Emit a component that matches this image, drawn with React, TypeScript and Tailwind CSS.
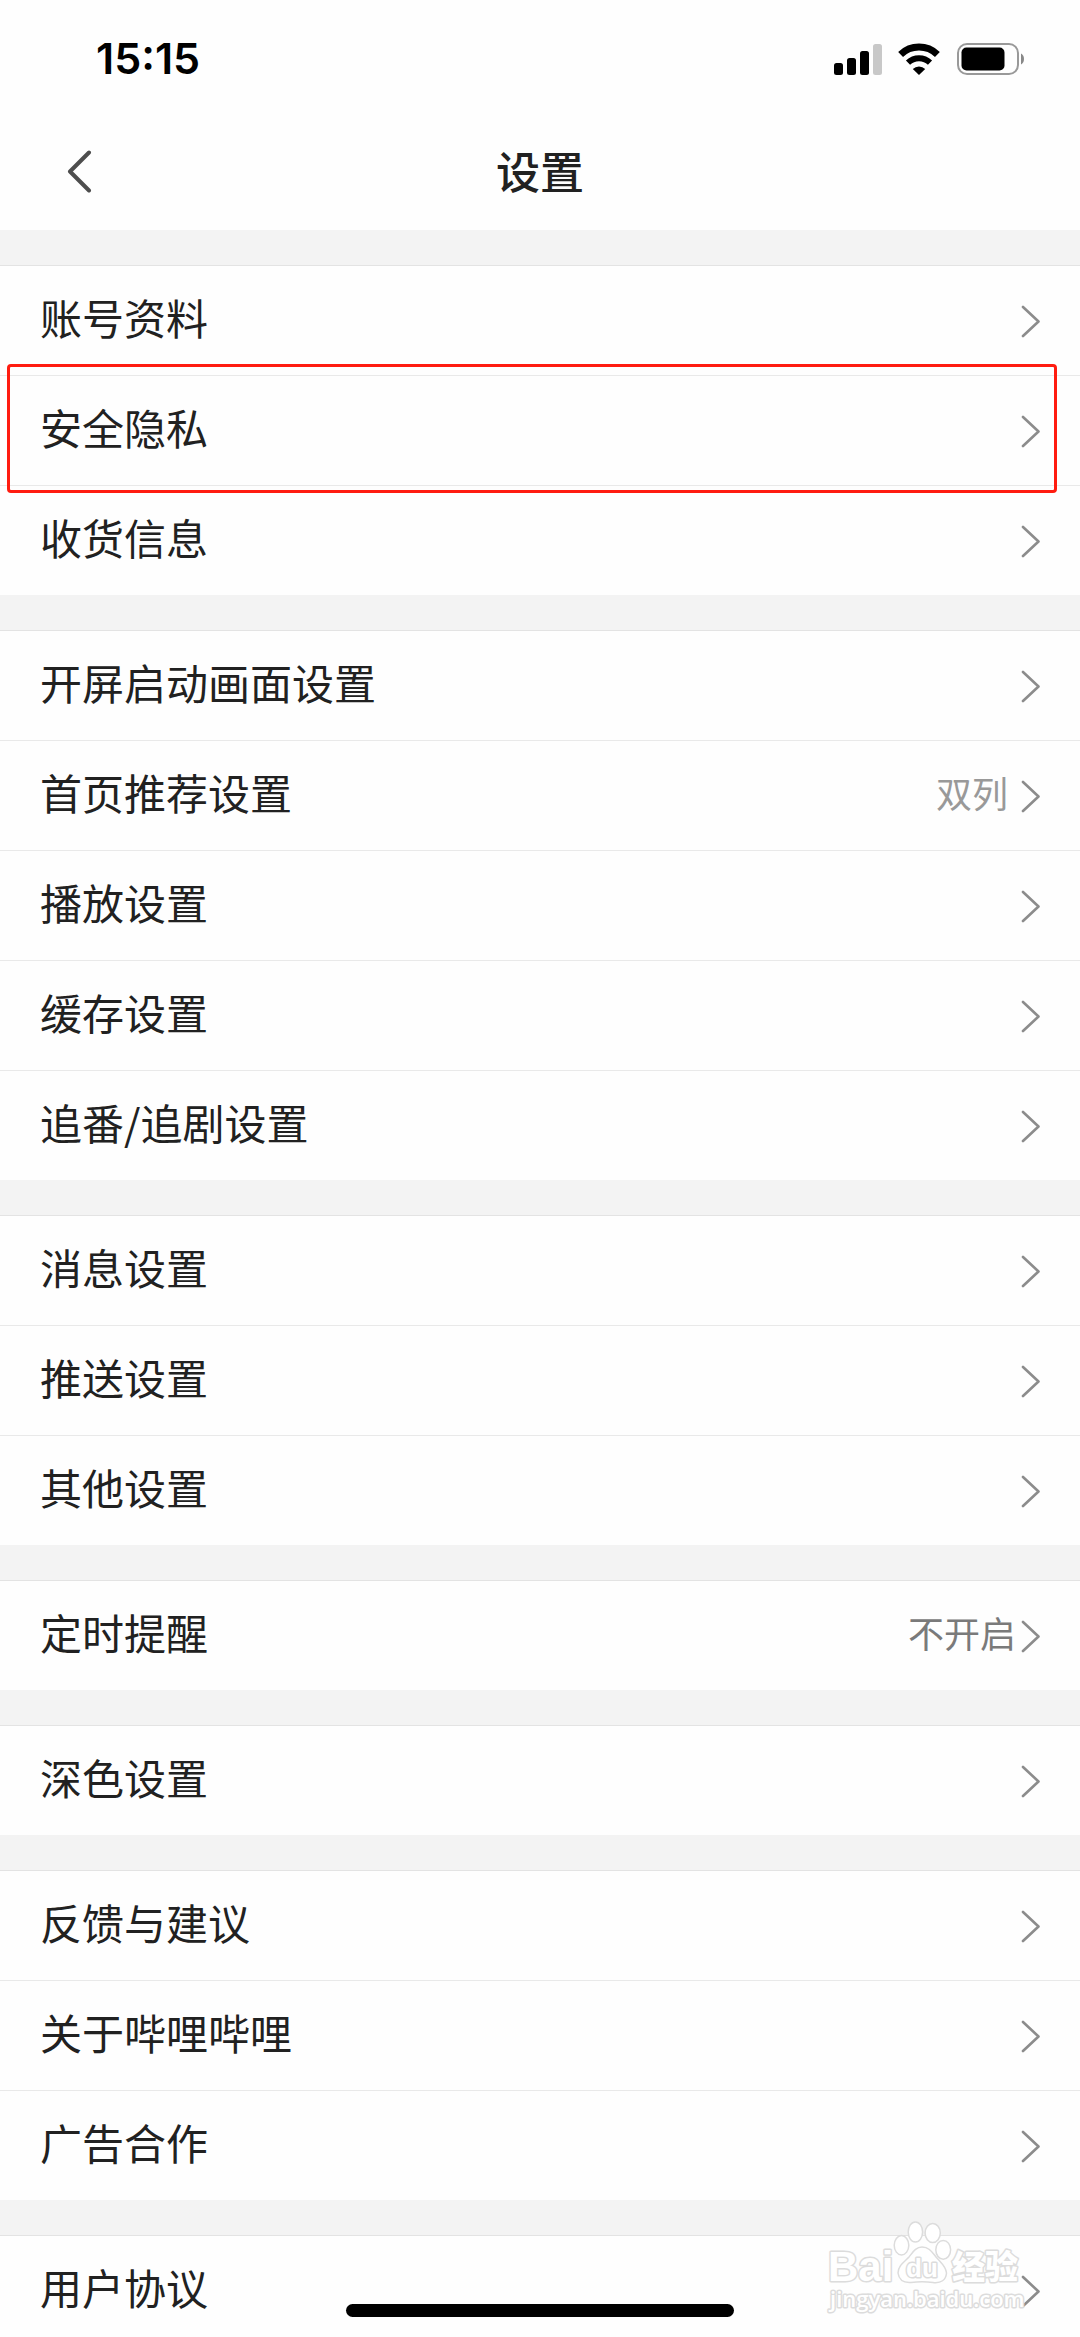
type Row = { label: string; value?: string; valueClass?: string; marked?: boolean };

const groups: Row[][] = [
  [{ label: "账号资料" }, { label: "安全隐私", marked: true }, { label: "收货信息" }],
  [
    { label: "开屏启动画面设置" },
    { label: "首页推荐设置", value: "双列", valueClass: "mr-3 text-[#999999]" },
    { label: "播放设置" },
    { label: "缓存设置" },
    { label: "追番/追剧设置" },
  ],
  [{ label: "消息设置" }, { label: "推送设置" }, { label: "其他设置" }],
  [{ label: "定时提醒", value: "不开启", valueClass: "mr-1 text-[#7a7a7a]" }],
  [{ label: "深色设置" }],
  [{ label: "反馈与建议" }, { label: "关于哔哩哔哩" }, { label: "广告合作" }],
  [{ label: "用户协议" }],
];

function StatusBar() {
  return (
    <div className="flex h-[117px] items-center justify-between pr-[54px] pl-24">
      <time className="font-['Inter',sans-serif] text-[43px] leading-none font-semibold text-black">15:15</time>
      <div className="flex items-center gap-4">
        <svg className="h-8 w-12" viewBox="0 0 48 32" aria-hidden="true">
          <rect x="0" y="20" width="9" height="12" rx="2.5" />
          <rect x="13" y="15" width="9" height="17" rx="2.5" />
          <rect x="26" y="8" width="9" height="24" rx="2.5" />
          <rect x="39" y="1" width="9" height="31" rx="2.5" fill="#c8c8c8" />
        </svg>
        <svg className="h-8 w-[42px]" viewBox="0 0 42 32" fill="none" stroke="#000" aria-hidden="true">
          <path d="M2.6 11.4 A26.5 26.5 0 0 1 39.4 11.4" strokeWidth="7" />
          <path d="M10 19.6 A16 16 0 0 1 32 19.6" strokeWidth="6" />
          <path d="M14.8 26 A8.8 8.8 0 0 1 27.2 26 L21 32 Z" fill="#000" stroke="none" />
        </svg>
        <svg className="h-8 w-[70px]" viewBox="0 0 70 32" aria-hidden="true">
          <rect x="2" y="1" width="60" height="30" rx="9" fill="none" stroke="#999" strokeWidth="2" />
          <rect x="5.5" y="4.5" width="43" height="23" rx="5" />
          <path d="M65 10.5 C69 12.5 69 19.5 65 21.5 Z" fill="#888" />
        </svg>
      </div>
    </div>
  );
}

function Chevron() {
  return (
    <svg className="h-9 w-5 shrink-0" viewBox="0 0 20 36" fill="none" stroke="#8c8c8c" strokeWidth="2.6" strokeLinecap="round" strokeLinejoin="round" aria-hidden="true">
      <path d="M3 4 L18.500 18.500 L3 33" />
    </svg>
  );
}

function Watermark() {
  return (
    <svg className="pointer-events-none absolute right-0 bottom-0 h-[137px] w-[260px]" viewBox="0 0 260 137" fill="#fff" stroke="#dcdcdc" strokeWidth="1.5" strokeLinejoin="round">
      <ellipse cx="81.5" cy="45.3" rx="7.3" ry="9.7" />
      <ellipse cx="95.4" cy="32" rx="7.2" ry="10" />
      <ellipse cx="112.7" cy="33" rx="7.6" ry="9.5" />
      <ellipse cx="123.2" cy="49.8" rx="7.4" ry="9.4" />
      <path d="M102 47 C96 47 93 52 89 57 C84 62 78 66 78 73 C79 80 84 83 91 82.5 C98 81.5 106 81.5 113 82.5 C121 83.5 126 80 126.500 73 C126 66 120 62 116 57 C112 52 109 47 102 47 Z" />
      <g paintOrder="stroke" strokeWidth="3">
        <text x="8" y="81" fontFamily="Liberation Sans" fontWeight="700" fontSize="42">Bai</text>
        <text x="86" y="77" fontFamily="Liberation Sans" fontWeight="700" fontSize="26">du</text>
        <text x="132" y="79" fontFamily="Noto Sans CJK SC" fontWeight="900" fontSize="33">经验</text>
        <text x="10" y="107" fontFamily="Open Sans" fontWeight="600" fontSize="22">jingyan.baidu.com</text>
      </g>
    </svg>
  );
}

export default function App() {
  return (
    <div className="relative flex h-screen flex-col overflow-hidden bg-[#f3f3f3] font-['Noto_Sans_CJK_SC',sans-serif] text-[#212121]">
      <header className="shrink-0 bg-[#fefefe]">
        <StatusBar />
        <div className="grid h-[113px] grid-cols-[1fr_auto_1fr] items-center px-16 pb-1">
          <button type="button" aria-label="返回" className="justify-self-start">
            <svg className="h-11 w-7" viewBox="0 0 28 44" fill="none" stroke="#4d4d4d" strokeWidth="4" strokeLinecap="round" strokeLinejoin="round" aria-hidden="true">
              <path d="M25 2.500 L6 21.500 L25 40.500" />
            </svg>
          </button>
          <h1 className="pb-1 text-[44px] leading-none font-medium">设置</h1>
        </div>
      </header>
      <main className="flex min-h-0 flex-1 flex-col overflow-y-auto [scrollbar-width:none]">
        {groups.map((rows, i) => (
          <section key={i} className="shrink-0">
            <div className="h-9 border-b border-[#e3e3e3]" />
            <ul className="divide-y divide-[#e9e9e9] bg-[#fefefe]">
              {rows.map((row) => (
                <li key={row.label} className="relative">
                  <button type="button" className="flex h-[109px] w-full items-center px-10 text-left">
                    <span className="flex-1 pb-2 text-[42px] leading-none">{row.label}</span>
                    {row.value && <span className={`pb-2 text-4xl leading-none ${row.valueClass}`}>{row.value}</span>}
                    <Chevron />
                  </button>
                  {row.marked && (
                    <div className="pointer-events-none absolute -top-3 right-[23px] -bottom-2 left-[7px] rounded-sm border-3 border-[#ff1c10]" />
                  )}
                </li>
              ))}
            </ul>
          </section>
        ))}
      </main>
      <Watermark />
      <div className="absolute inset-x-0 bottom-5 mx-auto h-[13px] w-[36%] rounded-full bg-black" />
    </div>
  );
}
